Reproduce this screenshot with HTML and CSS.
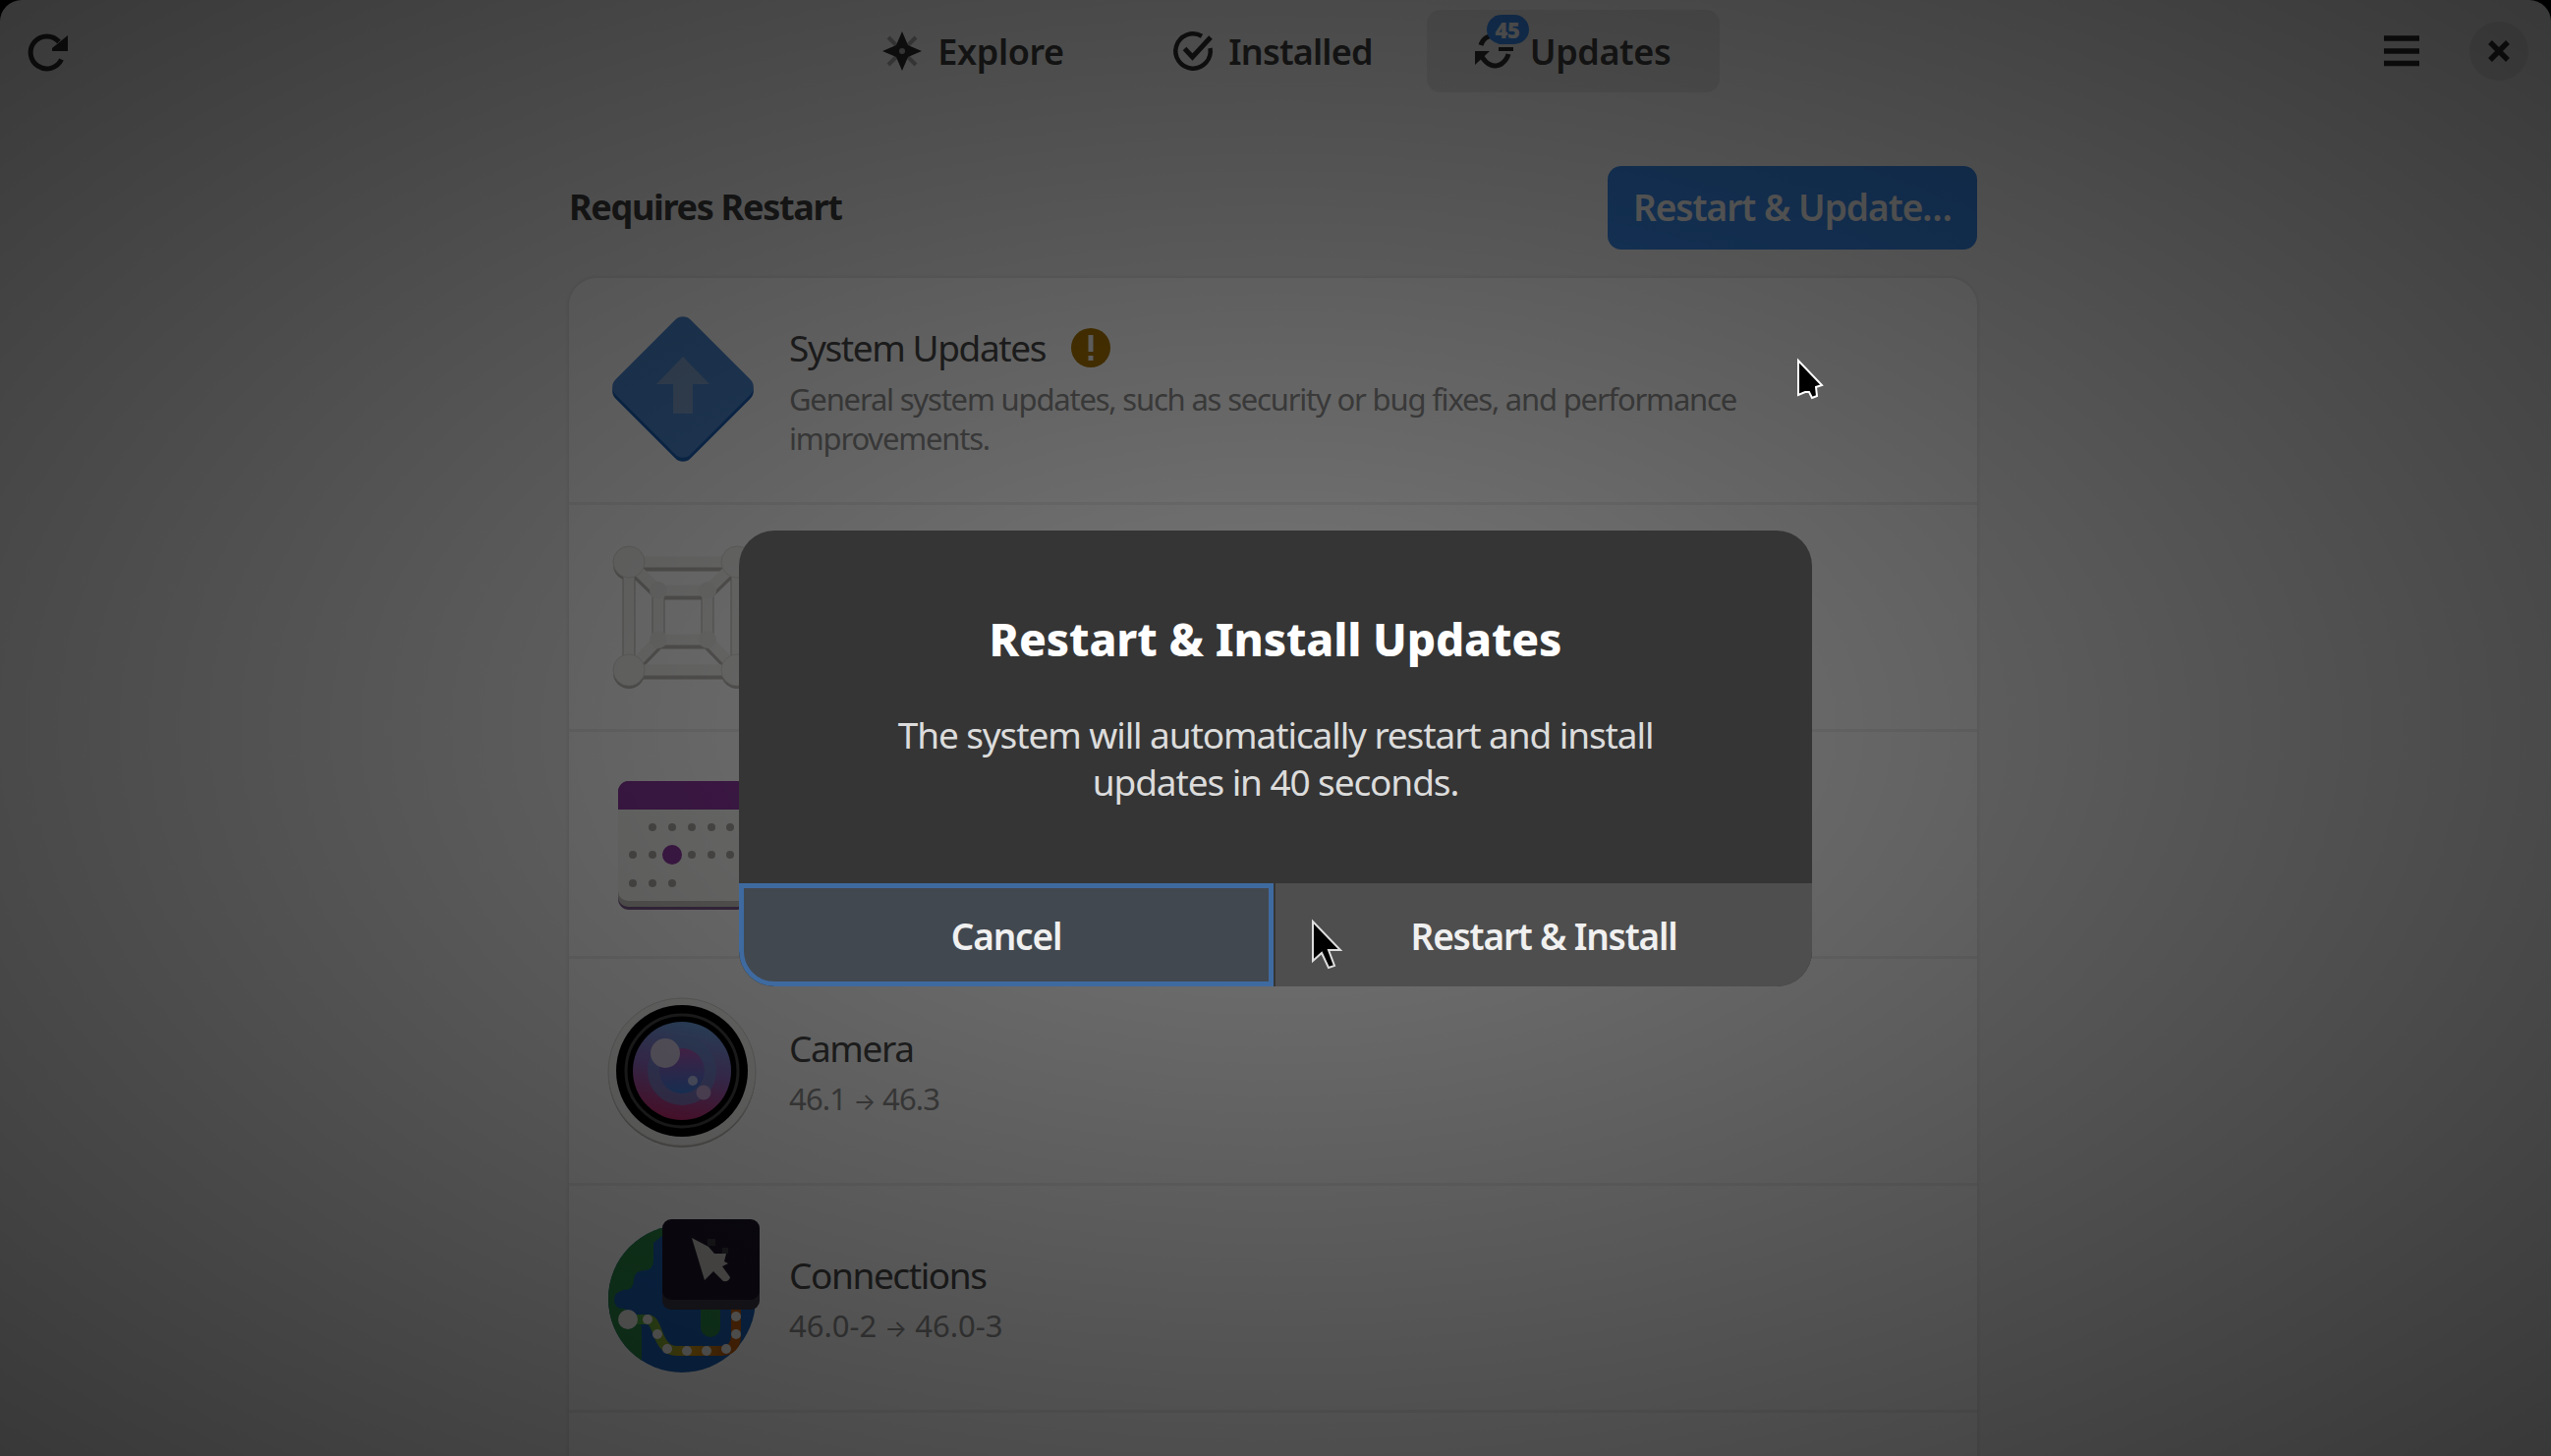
FILE: index.html
```
<!DOCTYPE html>
<html lang="en">
<head>
<meta charset="utf-8">
<title>Software</title>
<link rel="stylesheet" href="styles.css">
</head>
<body>
<div class="window">
  <header class="headerbar">
    <svg class="refresh" viewBox="0 0 42 40"><path d="M34.500 27.500A16.500 16.500 0 1 1 32 9.500" fill="none" stroke="#2b2b2b" stroke-width="5"/><path d="M41 3v16H25v-3z" fill="#2b2b2b"/></svg>
    <nav class="switcher">
      <div class="tab explore"><svg class="tab-icon" viewBox="0 0 40 40"><path d="M6 6l28 28M34 6L6 34" stroke="#a8a8a8" stroke-width="4"/><path fill="#2b2b2b" fill-rule="evenodd" d="M20 0l6 14 14 6-14 6-6 14-6-14-14-6 14-6zM20 17a3 3 0 1 0 0 6 3 3 0 0 0 0-6z"/></svg><span>Explore</span></div>
      <div class="tab installed"><svg class="tab-icon" viewBox="0 0 40 40"><path d="M37.500 17A17.700 17.700 0 1 1 29 4.700" fill="none" stroke="#2b2b2b" stroke-width="4.500"/><path d="M11.500 17.500l8 8.500L38 6" fill="none" stroke="#2b2b2b" stroke-width="5"/></svg><span>Installed</span></div>
      <div class="tab updates"><svg class="tab-icon" viewBox="0 0 40 40"><path d="M6 14C8 7 14 4 20 4M6 24c6 11 14 13 21 9 4-3 6-6 7-10" fill="none" stroke="#2b2b2b" stroke-width="5"/><path d="M0 34V20h15zM24 16h15v4H24z" fill="#2b2b2b"/></svg><span>Updates</span><b class="badge">45</b></div>
    </nav>
    <div class="controls">
      <svg class="menu" viewBox="0 0 36 32"><path d="M0 3h36M0 16h36M0 28.500h36" stroke="#2b2b2b" stroke-width="5.500"/></svg>
      <div class="close"><svg viewBox="0 0 22 22"><path d="M2 2l18 18M20 2L2 20" stroke="#2b2b2b" stroke-width="5.500"/></svg></div>
    </div>
  </header>
  <main class="content">
    <div class="section-head"><h2>Requires Restart</h2><div class="suggested"><span>Restart &amp; Update…</span></div></div>
    <section class="card">
      <div class="row">
        <svg class="app-icon" viewBox="0 0 160 160"><rect x="26" y="27" width="108" height="108" rx="11" transform="rotate(45 80 81)" fill="#1c5fb4"/><rect x="26" y="23" width="108" height="108" rx="11" transform="rotate(45 80 77)" fill="#4a86cf"/><path d="M80 46l27 28H90v30H70V74H53z" fill="#7d9fcb"/></svg>
        <div class="text"><div class="name"><span>System Updates</span><svg class="warn" viewBox="0 0 40 40"><circle cx="20" cy="20" r="20" fill="#a87400"/><path d="M20 7v17M20 28v5" stroke="#eee" stroke-width="5"/></svg></div>
        <p>General system updates, such as security or bug fixes, and performance<br>improvements.</p></div>
      </div>
      <div class="row">
        <svg class="app-icon" viewBox="0 0 160 160">
          <g fill="none" stroke="#bebcb8" stroke-width="13" transform="translate(0 3)"><path d="M25 24h110v110H25zM55 53h50v50H55zM25 24l30 29M135 24l-30 29M25 134l30-31M135 134l-30-31"/></g>
          <g fill="#bebcb8" transform="translate(0 3)"><circle cx="25" cy="24" r="16"/><circle cx="135" cy="24" r="16"/><circle cx="25" cy="134" r="16"/><circle cx="135" cy="134" r="16"/></g>
          <g fill="none" stroke="#f4f4f2" stroke-width="11"><path d="M25 24h110v110H25zM55 53h50v50H55zM25 24l30 29M135 24l-30 29M25 134l30-31M135 134l-30-31"/></g>
          <g fill="#f4f4f2" stroke="#dddcd8"><circle cx="25" cy="24" r="16"/><circle cx="135" cy="24" r="16"/><circle cx="25" cy="134" r="16"/><circle cx="135" cy="134" r="16"/></g><g fill="#eeeeec"><circle cx="55" cy="53" r="9"/><circle cx="105" cy="53" r="9"/><circle cx="55" cy="103" r="9"/><circle cx="105" cy="103" r="9"/></g>
        </svg>
      </div>
      <div class="row">
        <svg class="app-icon" viewBox="0 0 160 160"><rect x="14" y="16" width="132" height="131" rx="11" fill="#7d5a8c"/><path d="M14 40h132v94a10 10 0 0 1-10 10H24a10 10 0 0 1-10-10z" fill="#c4c2be"/><path d="M14 40h132v88a10 10 0 0 1-10 10H24a10 10 0 0 1-10-10z" fill="#f6f6f4"/><path d="M14 45V27a11 11 0 0 1 11-11h110a11 11 0 0 1 11 11v18z" fill="#8c38a2"/>
          <g fill="#a9a7a2"><circle cx="49" cy="63" r="4"/><circle cx="69" cy="63" r="4"/><circle cx="89" cy="63" r="4"/><circle cx="109" cy="63" r="4"/><circle cx="128" cy="63" r="4"/><circle cx="29" cy="91" r="4"/><circle cx="49" cy="91" r="4"/><circle cx="89" cy="91" r="4"/><circle cx="109" cy="91" r="4"/><circle cx="128" cy="91" r="4"/><circle cx="29" cy="120" r="4"/><circle cx="49" cy="120" r="4"/><circle cx="69" cy="120" r="4"/></g><circle cx="69" cy="91" r="10" fill="#8c38a2"/></svg>
      </div>
      <div class="row">
        <svg class="app-icon" viewBox="0 0 160 160">
          <defs><linearGradient id="lens" x1=".6" y1="0" x2=".4" y2="1"><stop offset="0" stop-color="#6aa0e0"/><stop offset=".5" stop-color="#8d68c0"/><stop offset="1" stop-color="#c42a70"/></linearGradient><linearGradient id="pupil" x1="0" y1="0" x2="0" y2="1"><stop offset="0" stop-color="#b058b8"/><stop offset="1" stop-color="#3d7fe0"/></linearGradient></defs>
          <circle cx="79" cy="83" r="75" fill="#b4b2ae"/><circle cx="79" cy="81" r="75" fill="#f6f6f4" stroke="#d8d6d2"/><circle cx="79" cy="80" r="67" fill="#000"/><circle cx="79" cy="80" r="57" fill="none" stroke="#444" stroke-width="3"/><circle cx="79" cy="80" r="50" fill="url(#lens)"/><circle cx="79" cy="80" r="35" fill="#6b8fd2" opacity=".65"/><circle cx="79" cy="80" r="23" fill="url(#pupil)"/><circle cx="62" cy="62" r="15" fill="#d6cce6"/><circle cx="90" cy="90" r="5" fill="#bcc4ec"/><circle cx="101" cy="102" r="7.500" fill="#c4a8da"/></svg>
        <div class="text version"><div class="name"><span>Camera</span></div><p>46.1 <i>→</i> 46.3</p></div>
      </div>
      <div class="row">
        <svg class="app-icon" viewBox="0 0 160 160">
          <defs><clipPath id="globe"><circle cx="79" cy="81" r="75"/></clipPath><linearGradient id="route"><stop offset="0" stop-color="#33b050"/><stop offset=".35" stop-color="#93b030"/><stop offset=".6" stop-color="#d89a10"/><stop offset=".9" stop-color="#c46010"/></linearGradient></defs>
          <g clip-path="url(#globe)"><path d="M0 0h160v160H0z" fill="#1a5fb4"/><path d="M0 0h62l-2 16-10 8v18q0 10-10 10-10 1-10 10 0 10-10 10-10 2-10 10 0 9 10 9 18 8 18 22v40L0 150zM98 80h20v30a10 10 0 0 1-20 0z" fill="#2a8a48"/></g>
          <path d="M24 102h20c12 0 8 32 30 32h45c10 0 15-6 15-15V85" fill="none" stroke="url(#route)" stroke-width="10"/>
          <g fill="#f0f0ee"><circle cx="24" cy="102" r="10"/><circle cx="44" cy="102" r="5"/><circle cx="54" cy="117" r="5"/><circle cx="64" cy="132" r="5"/><circle cx="84" cy="134" r="5"/><circle cx="104" cy="134" r="5"/><circle cx="124" cy="132" r="5"/><circle cx="134" cy="117" r="5"/><circle cx="134" cy="99" r="5"/></g>
          <rect x="59" y="8" width="99" height="84" rx="9" fill="#3c3846"/><rect x="59" y="0" width="99" height="82" rx="9" fill="#1c1628"/><path d="M89 19l17 9 6 7 12 0-2 8 4 2-6 3 8 11q-1 5-7 4L111 53l-9 9z" fill="#c8c6c2"/><path d="M105 20h8v7h-8zM120 29h6v6h-6z" fill="#3a3842"/></svg>
        <div class="text version long"><div class="name"><span>Connections</span></div><p>46.0-2 <i>→</i> 46.0-3</p></div>
      </div>
      <div class="row"></div>
    </section>
  </main>
</div>
<div class="shade">
  <div class="dialog">
    <div class="message"><h1><span>Restart &amp; Install Updates</span></h1><p>The system will automatically restart and install<br>updates in 40 seconds.</p></div>
    <div class="actions"><div class="action cancel"><span>Cancel</span></div><div class="action"><span>Restart &amp; Install</span></div></div>
  </div>
</div>
<svg class="pointer pointer-a" viewBox="0 0 28 42"><path d="M2 2v35l7-3 4 0 3 6 5-2-1-9 6-2z" fill="#000" stroke="#fff" stroke-width="2"/></svg>
<svg class="pointer pointer-b" viewBox="0 0 32 52"><path d="M2 2v40l9-8 7 15 6-2-6-16h12z" fill="#000" stroke="#ddd" stroke-width="2"/></svg>
</body>
</html>
```
FILE: styles.css
```
* { box-sizing: border-box; }
body { margin: 0; width: 2596px; height: 1482px; overflow: hidden; background: #000; font-family: "Noto Sans", sans-serif; font-size: 37px; letter-spacing: -1.2px; color: #3c3c3c; }
svg { display: block; flex: none; overflow: visible; }
h1, h2, p { margin: 0; }
span { white-space: nowrap; }
.window { width: 2596px; height: 1482px; overflow: hidden; border-radius: 22px 22px 0 0; background: #f2f2f2; }
.headerbar { display: grid; grid-template-columns: 1fr auto 1fr; align-items: center; height: 104px; padding: 0 23px 0 28px; }
.refresh { width: 42px; height: 40px; margin-top: 1px; }
.switcher { display: flex; gap: 7px; margin: 0 5px 0 -5px; font-weight: 600; font-size: 36px; letter-spacing: -.4px; }
.tab { position: relative; display: flex; align-items: center; justify-content: center; height: 84px; width: 298px; gap: 16px; border-radius: 14px; }
.tab-icon { width: 40px; height: 40px; }
.installed { letter-spacing: -.8px; }
.updates { background: #e0e0e0; }
.badge { position: absolute; left: 61px; top: 5px; width: 43px; height: 30px; border-radius: 15px; background: #3584e4; color: #eee; font-size: 22px; line-height: 30px; text-align: center; }
.controls { display: flex; justify-content: flex-end; align-items: center; gap: 51px; }
.menu { width: 36px; height: 32px; }
.close { display: flex; align-items: center; justify-content: center; width: 60px; height: 60px; border-radius: 50%; background: #e0e0e0; }
.close svg { width: 22px; height: 22px; }
.content { width: 1433px; margin: 65px auto 0 579px; }
.section-head { display: flex; justify-content: space-between; align-items: center; height: 85px; }
.section-head h2 { padding-bottom: 2px; font-size: 36px; font-weight: 700; line-height: 50px; letter-spacing: -1.3px; }
.suggested { display: flex; align-items: center; justify-content: center; width: 376px; height: 85px; padding-bottom: 2px; border-radius: 14px; background: #3584e4; color: #ededed; font-weight: 600; letter-spacing: -1px; }
.card { margin-top: 29px; background: #fff; border-radius: 28px 28px 0 0; box-shadow: 0 0 3px 2px rgba(0,0,0,.06); }
.row { display: flex; align-items: center; height: 231px; padding-left: 36px; gap: 28px; border-bottom: 3px solid #f0f0f0; }
.app-icon { width: 160px; height: 160px; }
.name { display: flex; align-items: center; gap: 26px; height: 50px; margin-bottom: 7px; font-size: 37px; letter-spacing: -1.4px; color: #484848; }
.warn { width: 40px; height: 40px; }
.version { padding-top: 3px; }
.text p { font-size: 31px; line-height: 40px; color: #8e8e8e; }
.version p { letter-spacing: -.8px; }
.long p { letter-spacing: 0; }
.text i { font-family: Inter, sans-serif; font-style: normal; font-size: 24px; }
.shade { position: absolute; inset: 0; display: flex; align-items: center; justify-content: center; padding-top: 62px; background: radial-gradient(ellipse farthest-corner, rgba(0,0,0,.52), rgba(0,0,0,.767)); }
.dialog { display: flex; flex-direction: column; width: 1092px; height: 464px; border-radius: 36px; overflow: hidden; background: #353535; text-align: center; color: #fff; }
.message { height: 359px; padding-top: 78px; }
.message h1 { font-size: 46px; font-weight: 800; line-height: 64px; letter-spacing: -.15px; }
.message p { margin-top: 42px; line-height: 47.500px; letter-spacing: -1.1px; color: #dcdcdc; }
.actions { display: grid; grid-template-columns: 544px 1fr; gap: 2px; height: 105px; }
.action { display: flex; align-items: center; justify-content: center; padding-top: 2px; background: #4e4e4e; color: #f0f0f0; font-weight: 600; }
.cancel { background: #42484f; border: 5px solid #3e6aa0; border-bottom-left-radius: 36px; }
.pointer { position: absolute; }
.pointer-a { left: 1828px; top: 365px; width: 28px; height: 42px; }
.pointer-b { left: 1334px; top: 936px; width: 32px; height: 52px; }
```
